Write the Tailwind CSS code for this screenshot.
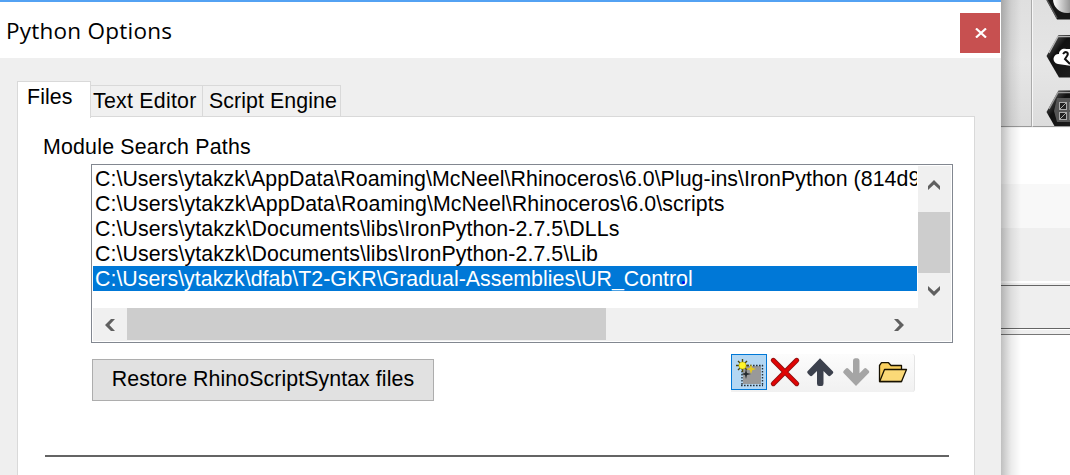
<!DOCTYPE html>
<html lang="en">
<head>
<meta charset="utf-8">
<title>Python Options</title>
<script src="https://cdn.jsdelivr.net/npm/@tailwindcss/browser@4"></script>
</head>
<body class="relative flex h-[475px] w-[1070px] overflow-hidden bg-white font-['Liberation_Sans',Arial,sans-serif] text-[21.35px] leading-[25px] text-black">

<!-- Dialog window -->
<main class="flex h-[475px] w-[1001px] shrink-0 flex-col border-t-2 border-[#53a2f3] bg-[#efefef]">
  <header class="flex h-14 shrink-0 items-start justify-between bg-white pr-px pl-[6px]">
    <h1 class="pt-[13px] font-['Open_Sans','Noto_Sans',sans-serif] text-[22.5px] leading-[32px] tracking-[0.24px]">Python Options</h1>
    <button class="mt-[11px] flex size-10 items-center justify-center bg-[#c75050] pl-px" aria-label="Close">
      <svg width="12" height="10" viewBox="0 0 12 10" fill="none" stroke="#fff" stroke-width="2.2"><path d="M1 .5 11 9.500M11 .5 1 9.500"/></svg>
    </button>
  </header>

  <div class="flex flex-1 flex-col pt-[23px] pr-[26px] pl-[17px]">
    <nav class="z-10 flex h-9 shrink-0 items-end">
      <div class="-mb-px h-[37px] w-[74px] shrink-0 border border-b-0 border-[#d9d9d9] bg-white pt-[3px] pl-[9px] tracking-[0.1px]">Files</div>
      <div class="h-8 w-[112px] shrink-0 border-t border-r border-b border-[#d9d9d9] bg-[#f0f0f0] pt-[3px] pl-[2px] tracking-[0.25px] whitespace-nowrap">Text Editor</div>
      <div class="h-8 w-[138px] shrink-0 border-t border-r border-b border-[#d9d9d9] bg-[#f0f0f0] pt-[3px] pl-[6px] tracking-[0.08px] whitespace-nowrap">Script Engine</div>
    </nav>

    <section class="-mt-px flex flex-1 flex-col border border-b-0 border-[#d9d9d9] bg-white pr-[21px] pl-[25px]">
      <h2 class="mt-[18px] tracking-[0.2px]">Module Search Paths</h2>

      <div class="mt-[4px] ml-[48px] flex h-[179px] w-[862px] shrink-0 flex-col border border-[#828790] p-px">
        <div class="flex h-[142px]">
          <ul class="h-[142px] w-[824px] overflow-hidden tracking-[0.07px] whitespace-nowrap">
            <li class="h-[25px] pt-px pl-[2px] tracking-[0.04px]">C:\Users\ytakzk\AppData\Roaming\McNeel\Rhinoceros\6.0\Plug-ins\IronPython (814d9</li>
            <li class="h-[25px] pt-px pl-[2px]">C:\Users\ytakzk\AppData\Roaming\McNeel\Rhinoceros\6.0\scripts</li>
            <li class="h-[25px] pt-px pl-[2px]">C:\Users\ytakzk\Documents\libs\IronPython-2.7.5\DLLs</li>
            <li class="h-[25px] pt-px pl-[2px]">C:\Users\ytakzk\Documents\libs\IronPython-2.7.5\Lib</li>
            <li class="h-[25px] bg-[#0078d7] pt-px pl-[2px] tracking-[0.02px] text-white">C:\Users\ytakzk\dfab\T2-GKR\Gradual-Assemblies\UR_Control</li>
          </ul>
          <div class="ml-px flex w-[33px] flex-col bg-[#f0f0f0] pr-px">
            <div class="flex h-[46px] items-center justify-center pb-[9px]">
              <svg width="12" height="10" viewBox="0 0 12 10" fill="#606060"><path d="M6 0 12 6V10L6 4.400 0 10V6Z"/></svg>
            </div>
            <div class="h-[61px] bg-[#cdcdcd]"></div>
            <div class="flex h-[35px] items-center justify-center">
              <svg width="12" height="10" viewBox="0 0 12 10" fill="#606060"><path d="M6 10 12 4V0L6 5.600 0 0V4Z"/></svg>
            </div>
          </div>
        </div>
        <div class="flex h-[33px] items-stretch bg-[#f0f0f0]">
          <div class="flex w-[34px] items-center justify-center pr-px">
            <svg width="10" height="12" viewBox="0 0 10 12" fill="#606060"><path d="M0 6 6 0H10L4.400 6 10 12H6Z"/></svg>
          </div>
          <div class="mb-px w-[479px] bg-[#cdcdcd]"></div>
          <div class="flex flex-1 items-center justify-end pr-[47px]">
            <svg width="10" height="12" viewBox="0 0 10 12" fill="#606060"><path d="M10 6 4 0H0L5.600 6 0 12H4Z"/></svg>
          </div>
        </div>
      </div>

      <div class="mt-[11px] ml-[49px] flex h-[47px] w-[823px] shrink-0 items-start justify-between">
        <button class="mt-[5px] h-[42px] w-[342px] border border-[#adadad] bg-[#e1e1e1] pb-px tracking-[0.07px] whitespace-nowrap">Restore RhinoScriptSyntax files</button>
        <div class="flex h-[38px] w-[184px] rounded-r-[3px] border-r border-[#e4e4e4] bg-linear-to-b from-[#fcfcfc] to-[#f1f1f1]">
          <div class="size-9 shrink-0 border border-[#0078d7] bg-[#b3d7f3]">
            <svg width="34" height="34" viewBox="0 0 34 34">
              <rect x="11" y="11" width="18" height="18" fill="#999"/>
              <path d="M9 10.500H31M9 30.500H31M10 10V31M30.500 10V31" stroke="#24323e" stroke-width="1.400" stroke-dasharray="1.600 1.400" fill="none"/>
              <path d="M10.500 4V17M4 10.500H17M6 6 15 15M15 6 6 15" stroke="#4a4410" stroke-width="1.400"/>
              <circle cx="10.500" cy="10.500" r="3.600" fill="#fff52a" stroke="#b5a800" stroke-width=".5"/>
              <path d="m19 9 1.200 3.800L24 14l-3.800 1.200L19 19l-1.200-3.800L14 14l3.800-1.200Z" fill="#e5c81d"/>
              <path d="m14 14 1 4 4 1-4 1-1 4-1-4-4-1 4-1Z" fill="#242a2e"/>
            </svg>
          </div>
          <svg class="shrink-0" width="36" height="36" viewBox="0 0 36 36" stroke-linecap="round">
            <path d="M6.300 6.300 29.700 29.700M29.700 6.300 6.300 29.700" stroke="#8c1212" stroke-width="5"/><path d="M6.300 6.300 29.700 29.700M29.700 6.300 6.300 29.700" stroke="#e00505" stroke-width="3.300"/>
          </svg>
          <svg class="shrink-0" width="36" height="36" viewBox="0 0 36 36" fill="#3c414d">
            <path d="M17 4.200 4.300 17.500Q3.800 18.600 5 19.800L7 21.800Q8.200 22.600 9.400 21.500L14 17V29.500Q14 32 16 32H18.500Q20.500 32 20.500 29.500V17L25 21.500Q26.200 22.600 27.400 21.800L29.800 19.500Q30.700 18.500 30 17.500Z"/>
          </svg>
          <svg class="shrink-0" width="36" height="36" viewBox="0 0 36 36" fill="#a5a5a5">
            <path d="M17 32 4.300 18.700Q3.800 17.600 5 16.400L7 14.400Q8.200 13.600 9.400 14.700L14 19.200V6.700Q14 4.200 16 4.200H18.500Q20.500 4.200 20.500 6.700V19.200L25 14.700Q26.200 13.600 27.400 14.400L29.800 16.700Q30.700 17.700 30 18.700Z"/>
          </svg>
          <svg class="shrink-0" width="36" height="36" viewBox="0 0 36 36" stroke="#171100" stroke-width="1.300" stroke-linejoin="round">
            <path d="M4.500 27.500V11.500L6.500 8.700h7l2.500 2.800H26.500V27.500Z" fill="#f9cf5e"/><path d="M4.700 27.500 9.500 15.500H31.500L26.500 27.500Z" fill="#fbd977"/>
          </svg>
        </div>
      </div>
      <hr class="mt-[54px] ml-[2px] h-[2px] w-[904px] border-0 bg-[#646464]">
    </section>
  </div>
</main>

<!-- Application behind the dialog -->
<aside class="relative flex w-[69px] shrink-0 flex-col bg-white">
  <div class="flex h-[128px] shrink-0 border-b border-[#f5f5f5] bg-linear-to-b from-[#dfdfdf] via-[#e6e6e6] to-[#dcdcdc]">
    <div class="w-[31px] border-r border-b border-r-[#aaa] border-b-[#999]"></div>
    <div class="w-[38px] overflow-hidden border-b border-l border-b-[#999] border-l-[#f7f7f7]">
      <svg width="37" height="127" viewBox="1033 0 37 127">
        <defs>
          <linearGradient id="hex" x1="0" y1="0" x2="1" y2="1"><stop stop-color="#777"/><stop offset=".35" stop-color="#111"/><stop offset="1" stop-color="#222"/></linearGradient>
          <linearGradient id="ball" x1="0" y1="0" x2="1" y2="0"><stop stop-color="#fff"/><stop offset=".6" stop-color="#999"/></linearGradient>
        </defs>
        <path d="m1046-1 11 20.500h20V-1Z" fill="#161616"/><path d="m1047 0 10 18" stroke="#555" stroke-width="1.500"/>
        <circle cx="1067" cy="-1" r="14" fill="url(#ball)"/>
        <path d="m1046.500 56 12-21H1080V77.500h-21Z" fill="url(#hex)"/>
        <path d="m1049 53 9-16.500h12" fill="none" stroke="#b5b5b5" stroke-width="1.500"/>
        <path d="M1058 64a5 5 0 0 1-4-7 5 5 0 0 1 5-3c0-4 4-6 7-5l6 0V66l-7-1Z" fill="#fff"/>
        <path d="M1063 54c3-4 6-1 4 2l-2 3 5 5" fill="none" stroke="#111" stroke-width="2"/>
        <path d="m1046.500 112 12-21.500H1080V134h-21Z" fill="url(#hex)"/>
        <path d="m1049 109 9-16.500h12" fill="none" stroke="#999" stroke-width="1.500"/>
        <path d="M1057 98h14v24h-14l-3-11Z" fill="#555"/>
        <g fill="#222" stroke="#aaa"><rect x="1059.500" y="102.500" width="7" height="7"/><rect x="1059.500" y="112.500" width="7" height="7"/><path d="M1070 102v8M1070 112v8M1060 109l6-6M1060 119l6-6"/></g>
      </svg>
    </div>
  </div>
  <div class="h-[56px] shrink-0"></div>
  <div class="h-[44px] shrink-0 bg-[#f8f8f8]"></div>
  <div class="h-[53px] shrink-0 bg-[#efefef]"></div>
  <div class="mt-[2px] h-[2px] shrink-0 bg-[#efefef]"></div>
  <div class="h-[44px] shrink-0 border-y border-[#656565] bg-[#efefef]"></div>
  <div class="mt-px h-[5px] shrink-0 border-b border-[#777] bg-[#efefef]"></div>
  <!-- Shadow cast by the dialog -->
  <div class="absolute inset-y-0 left-0 w-[20px] bg-linear-to-r from-black/25 via-black/8 to-transparent"></div>
</aside>

<!-- Pointer mark -->
<div class="absolute top-[281px] left-[682px] size-[3px] rounded-full bg-[#0000f0]"></div>
</body>
</html>
